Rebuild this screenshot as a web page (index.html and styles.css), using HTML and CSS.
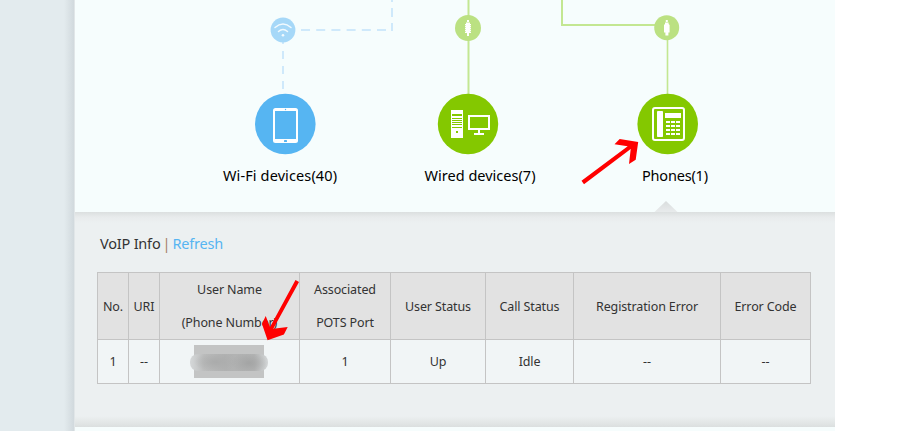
FILE: index.html
```html
<!DOCTYPE html>
<html lang="en">
<head>
<meta charset="utf-8">
<title>VoIP Info</title>
<link rel="stylesheet" href="styles.css">
</head>
<body>
<div class="page">
  <aside class="side"></aside>
  <main class="main">
    <section class="topology">
      <svg class="map" width="760" height="212" viewBox="75 0 760 212">
        <g fill="none" stroke="#cfe9fb" stroke-width="2">
          <path d="M301 30H392" stroke-dasharray="9 6.2"/>
          <path d="M392 0V31" stroke-dasharray="9 6" stroke-dashoffset="7"/>
          <path d="M283 42V90" stroke-dasharray="8 7" stroke-dashoffset="6"/>
        </g>
        <g fill="none" stroke="#c3e792" stroke-width="2">
          <path d="M468.500 0V95"/>
          <path d="M562 0V25H656"/>
          <path d="M667.500 38V95" stroke-width="1.600"/>
        </g>
        <circle cx="283" cy="30" r="12.400" fill="#a6d8f8"/>
        <g fill="none" stroke="#f2fafe" stroke-width="1.500" stroke-linecap="round">
          <path d="M275 27.500Q283 20.500 291 27.500"/>
          <path d="M278.500 31.500Q283 27.500 287.500 31.500"/>
        </g>
        <circle cx="283" cy="35.200" r="1.300" fill="#f2fafe"/>
        <circle cx="468" cy="28" r="13" fill="#bbe182"/>
        <circle cx="666.700" cy="27.700" r="12.500" fill="#bbe182"/>
        <path d="M467 20h2v2h-2zM466 22.500h4v1.500h1v1h-.6v1h.6v1h-.6v1h.6v1h-.6v1h.6v1h-.6v1h.6v1h-2v3h-2v-3h-2v-1h.6v-1h-.6v-1h.6v-1h-.6v-1h.6v-1h-.6v-1h.6v-1h-.6v-1h1z" fill="#fff"/>
        <path d="M665.800 20h2v2h-2zM665 22.500h3.600v1.500l1 1v7.500h-1.200v3h-3v-3h-1.400v-7.500l1-1z" fill="#fff"/>

        <circle cx="285.300" cy="124" r="30.300" fill="#56b5f2"/>
        <rect x="273" y="108" width="25" height="35" rx="2.500" fill="#fff"/>
        <path d="M275 111h21v28h-21z" fill="#56b5f2"/>
        <circle cx="285.500" cy="109.500" r=".7" fill="#56b5f2"/>
        <rect x="284" y="140" width="3" height="2" rx=".6" fill="#56b5f2"/>

        <circle cx="468" cy="124" r="30.200" fill="#84c800"/>
        <path d="M451 110h12v28h-12z" fill="#fff"/>
        <path d="M452 114h10v2h-10zM452 118h10v1h-10zM452 120h10v1h-10zM452 122h10v1h-10zM452 124h10v1h-10zM452 127h10v1h-10zM456 131h2v2h-2z" fill="#84c800"/>
        <path d="M468 115h22v15h-22zM478 130h2v3h-2zM474 133h10v2h-10z" fill="#fff"/>
        <path d="M470 117h18v11h-18z" fill="#84c800"/>

        <circle cx="667.700" cy="124" r="30.300" fill="#84c800"/>
        <rect x="653" y="108" width="31" height="32" rx="2" fill="none" stroke="#fff" stroke-width="2"/>
        <rect x="657" y="111" width="6" height="26" rx=".8" fill="#fff"/>
        <path d="M665 113h16v5h-16zM666 121h4v2h-4zM671 121h4v2h-4zM676 121h4v2h-4zM666 125h4v2h-4zM671 125h4v2h-4zM676 125h4v2h-4zM666 129h4v2h-4zM671 129h4v2h-4zM676 129h4v2h-4zM666 133h4v2h-4zM671 133h4v2h-4zM676 133h4v2h-4z" fill="#fff"/>
        <defs>
          <linearGradient id="tip" x1="0" y1="0" x2="0" y2="1"><stop offset="0" stop-color="#d9dddd"/><stop offset="1" stop-color="#e8ebec"/></linearGradient>
        </defs>
        <path d="M654.500 212L666 201L677.500 212z" fill="url(#tip)"/>
        <g class="labels" text-anchor="middle">
          <text x="280" y="181" textLength="114">Wi-Fi devices(40)</text>
          <text x="480" y="181" textLength="111">Wired devices(7)</text>
          <text x="675" y="181" textLength="66">Phones(1)</text>
        </g>
      </svg>
    </section>
    <section class="panel">
      <h1 class="heading"><span class="title">VoIP Info</span><span class="bar">|</span><a class="refresh">Refresh</a></h1>
      <table class="voip">
        <colgroup><col class="c-no"><col class="c-uri"><col class="c-name"><col class="c-port"><col class="c-user"><col class="c-call"><col class="c-reg"><col class="c-code"></colgroup>
        <tr class="head"><th>No.</th><th>URI</th><th>User Name<br>(Phone Number)</th><th>Associated<br>POTS Port</th><th>User Status</th><th>Call Status</th><th>Registration Error</th><th>Error Code</th></tr>
        <tr class="row"><td>1</td><td>--</td><td><div class="mask"><div class="smudge"></div></div></td><td>1</td><td>Up</td><td>Idle</td><td>--</td><td>--</td></tr>
      </table>
    </section>
  </main>
</div>
<svg class="arrows" width="906" height="431" viewBox="0 0 906 431" fill="#f00">
  <path d="M581.500 180.700L627.700 146.300L614.500 144.300L619.700 139L638.200 142L635.700 159.700L629 164L630.700 148.900L584 184.300z"/>
  <path d="M295.500 280L270 327L265.700 316L262 324L267.600 340.300L283.900 334.500L287.700 327L273.300 328.800L299 282z"/>
</svg>
</body>
</html>
```
FILE: styles.css
```css
body {
  margin: 0;
  background: #fff;
  color: #333;
  font-family: "Noto Sans", "Open Sans", sans-serif;
  overflow: hidden;
}
.page {
  display: flex;
  height: 431px;
}
.side {
  width: 75px;
  box-sizing: border-box;
  border-right: 1px solid #e1e6e8;
  background: linear-gradient(to right, #e3ebee 0, #e3ebee 64px, #d1d9dd 74px);
}
.main {
  width: 760px;
  background: #f6fdfd;
}
.topology {
  height: 212px;
}
.map {
  display: block;
}
.labels {
  font-size: 14.5px;
  fill: #000;
}
.panel {
  height: 215px;
  box-sizing: border-box;
  padding: 19px 24px 0 22px;
  background: linear-gradient(to bottom, #dbdfdf 0, #e8ebec 5px, #ecf0f1 11px, #ecf0f1 204px, #e5e9e9 209px, #dbdfdf 215px);
}
.heading {
  display: flex;
  gap: 4px;
  margin: 0 0 17px 3px;
  height: 24px;
  line-height: 24px;
  font-size: 14.5px;
  font-weight: 400;
  letter-spacing: -0.2px;
}
.bar {
  color: #a77c68;
  width: 4px;
  text-indent: -2px;
}
.refresh {
  color: #56b5f2;
}
.voip {
  width: 714px;
  table-layout: fixed;
  border-collapse: collapse;
  font-size: 12.5px;
  letter-spacing: -0.12px;
  text-align: center;
}
.voip th,
.voip td {
  padding: 0;
  border: 1px solid #c4c4c4;
  font-weight: 400;
}
.head {
  height: 67px;
  background: #e2e2e2;
  line-height: 33px;
}
.row {
  height: 44px;
  background: #f1f5f6;
}
.c-no, .c-uri { width: 31px; }
.c-name { width: 140px; }
.c-port { width: 91px; }
.c-user { width: 95px; }
.c-call { width: 88px; }
.c-reg { width: 147px; }
.c-code { width: 90px; }
.mask {
  display: flex;
  align-items: center;
  width: 70px;
  height: 33px;
  margin: 0 0 0 34px;
  background: #c3c4c4;
}
.smudge {
  flex: none;
  width: 78px;
  height: 17px;
  margin: 2px 0 0 -4px;
  border-radius: 8px;
  background:
    radial-gradient(ellipse 22px 10px at 26px 8px, #aaabab, rgba(170, 171, 171, 0)),
    radial-gradient(ellipse 18px 11px at 59px 9px, #a3a4a4, rgba(163, 164, 164, 0)),
    linear-gradient(to right, #d5d8d9 0, #bcbdbd 14px, #b1b2b2 35px, #b4b5b5 64px, #d3d6d7 78px);
}
.arrows {
  position: absolute;
  top: 0;
  left: 0;
}
```
